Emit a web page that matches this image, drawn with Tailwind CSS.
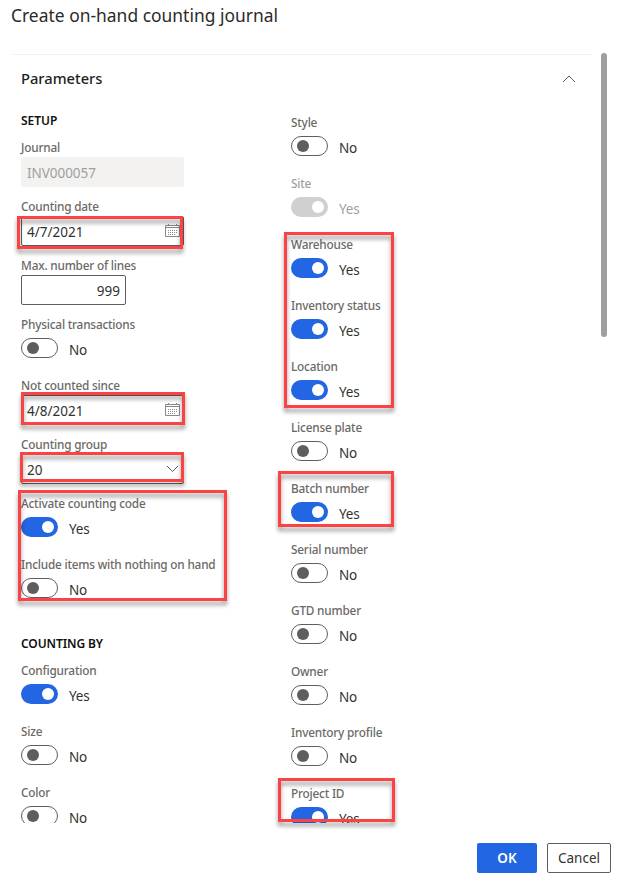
<!DOCTYPE html>
<html lang="en">
<head>
<meta charset="utf-8">
<title>Create on-hand counting journal</title>
<script src="https://cdn.jsdelivr.net/npm/@tailwindcss/browser@4"></script>
</head>
<body class="bg-white">
<div class="relative flex h-[883px] w-[626px] flex-col overflow-hidden bg-white font-['Noto_Sans',sans-serif] text-[#323130]">
  <h1 class="h-[54px] pl-[11px] pt-[3px] text-[17.4px] leading-6 tracking-[0.02px] text-[#2b2a29]">Create on-hand counting journal</h1>

  <div class="flex h-[769px] overflow-hidden">
    <main class="ml-3 w-[580px] border-t border-[#f3f2f1]">
      <div class="flex h-[48px] items-center justify-between pl-[9px] pr-[16px]">
        <h2 class="pb-0.5 text-[14.7px] font-medium leading-5 text-[#201f1e]">Parameters</h2>
        <svg class="h-[8px] w-[14px]" viewBox="0 0 14 8" fill="none" stroke="#605e5c"><path d="M1 7 7 1 13 7"/></svg>
      </div>
      <div class="flex pl-[9px]">
        <section class="w-[270px] pt-2">
          <h3 class="h-[27px] text-[12px] font-semibold leading-5 tracking-[-0.05px] text-[#11100f]">SETUP</h3>
          <div id="setup"></div>
          <h3 class="h-[45px] pt-[18px] text-[12px] font-semibold leading-5 tracking-[-0.1px] text-[#11100f]">COUNTING BY</h3>
          <div id="by"></div>
        </section>
        <section class="w-[240px] pt-[10px]" id="right"></section>
      </div>
    </main>
  </div>

  <footer class="flex gap-[10px] pl-[477px] pt-5">
    <button class="h-[30px] w-[60px] rounded-[2px] bg-[#2266e3] text-[13.5px] font-semibold text-white">OK</button>
    <button class="h-[30px] w-[64px] rounded-[2px] border border-[#605e5c] bg-white pt-px text-[13.5px]">Cancel</button>
  </footer>

  <div class="absolute left-[601px] top-[53px] h-[284px] w-[6px] rounded-full bg-[#9f9f9f]"></div>

  <div class="absolute left-[17px] top-[216px] h-[33px] w-[166px] border-3 border-[#fc4343] drop-shadow-[0_4px_2px_rgba(0,0,0,0.4)]"></div>
  <div class="absolute left-[21px] top-[392px] h-[33px] w-[164px] border-3 border-[#fc4343] drop-shadow-[0_4px_2px_rgba(0,0,0,0.4)]"></div>
  <div class="absolute left-[20px] top-[452px] h-[30px] w-[164px] border-3 border-[#fc4343] drop-shadow-[0_4px_2px_rgba(0,0,0,0.4)]"></div>
  <div class="absolute left-[18px] top-[490px] h-[111px] w-[209px] border-3 border-[#fc4343] drop-shadow-[0_4px_2px_rgba(0,0,0,0.4)]"></div>
  <div class="absolute left-[284px] top-[232px] h-[176px] w-[110px] border-3 border-[#fc4343] drop-shadow-[0_4px_2px_rgba(0,0,0,0.4)]"></div>
  <div class="absolute left-[278px] top-[471px] h-[56px] w-[116px] border-3 border-[#fc4343] drop-shadow-[0_4px_2px_rgba(0,0,0,0.4)]"></div>
  <div class="absolute left-[278px] top-[778px] h-[44px] w-[117px] border-3 border-[#fc4343] drop-shadow-[0_4px_2px_rgba(0,0,0,0.4)]"></div>
</div>
<script>
const label = (t, c = 'text-[#6b6967]') => `<div class="h-[19px] whitespace-nowrap text-[11.8px] font-medium leading-[19px] tracking-[-0.2px] ${c}">${t}</div>`;

const toggle = (t, state) => {
  const on = state !== 'off', dis = state === 'disabled';
  const track = dis ? 'bg-[#d2d0ce] justify-end' : on ? 'bg-[#2266e3] justify-end' : 'border border-[#605e5c] justify-start';
  const pad = on ? 'px-1' : 'px-[5px]';
  return `<div class="h-[61px]">${label(t, dis ? 'text-[#a19f9d]' : undefined)}
    <div class="flex pt-1"><div class="flex h-5 w-[37px] items-center rounded-full ${track} ${pad}"><div class="size-3 rounded-full ${on ? 'bg-white' : 'bg-[#605e5c]'}"></div></div>
    <div class="pl-[11px] pt-0.5 text-[13.5px] leading-5 tracking-[-0.2px] ${dis ? 'text-[#a19f9d]' : 'text-[#323130]'}">${on ? 'Yes' : 'No'}</div></div></div>`;
};

const calendar = `<svg class="-mr-[2px] h-[14px] w-[15px]" viewBox="0 0 15 14" fill="none" stroke="#8a8886"><path d="M.5 1.5h14v11H.5zM.5 3.5h14M3.5 0v2M11.5 0v2"/><path d="M3 6.5h9.5M3 8.5h9.5M3 10.5h7" stroke-dasharray="1 1"/></svg>`;
const chevron = `<svg class="-mr-px h-[8px] w-[13px]" viewBox="0 0 13 8" fill="none" stroke="#605e5c"><path d="M1 1 6.5 6.5 12 1"/></svg>`;

const input = (t, v, box, icon = '') => `<div class="h-[59px]">${label(t)}
  <div class="flex h-[30px] items-center rounded-[2px] text-[13.5px] leading-5 ${box}"><span class="pt-0.5">${v}</span>${icon}</div></div>`;

const edit = 'w-[163px] justify-between border border-[#605e5c] px-[5px]';
document.getElementById('setup').innerHTML =
  input('Journal', 'INV000057', 'w-[163px] bg-[#f3f2f1] px-[6px] tracking-[-0.05px] text-[#a19f9d]') +
  input('Counting date', '4/7/2021', edit, calendar) +
  input('Max. number of lines', '999', 'w-[105px] justify-end border border-[#605e5c] px-[5px]') +
  toggle('Physical transactions', 'off') +
  input('Not counted since', '4/8/2021', edit, calendar) +
  input('Counting group', '20', edit, chevron) +
  toggle('Activate counting code', 'on') +
  toggle('Include items with nothing on hand', 'off');
document.getElementById('by').innerHTML = toggle('Configuration', 'on') + toggle('Size', 'off') + toggle('Color', 'off');
document.getElementById('right').innerHTML = [
  ['Style', 'off'], ['Site', 'disabled'], ['Warehouse', 'on'], ['Inventory status', 'on'], ['Location', 'on'],
  ['License plate', 'off'], ['Batch number', 'on'], ['Serial number', 'off'], ['GTD number', 'off'],
  ['Owner', 'off'], ['Inventory profile', 'off'], ['Project ID', 'on']
].map(([t, s]) => toggle(t, s)).join('');
</script>
</body>
</html>
